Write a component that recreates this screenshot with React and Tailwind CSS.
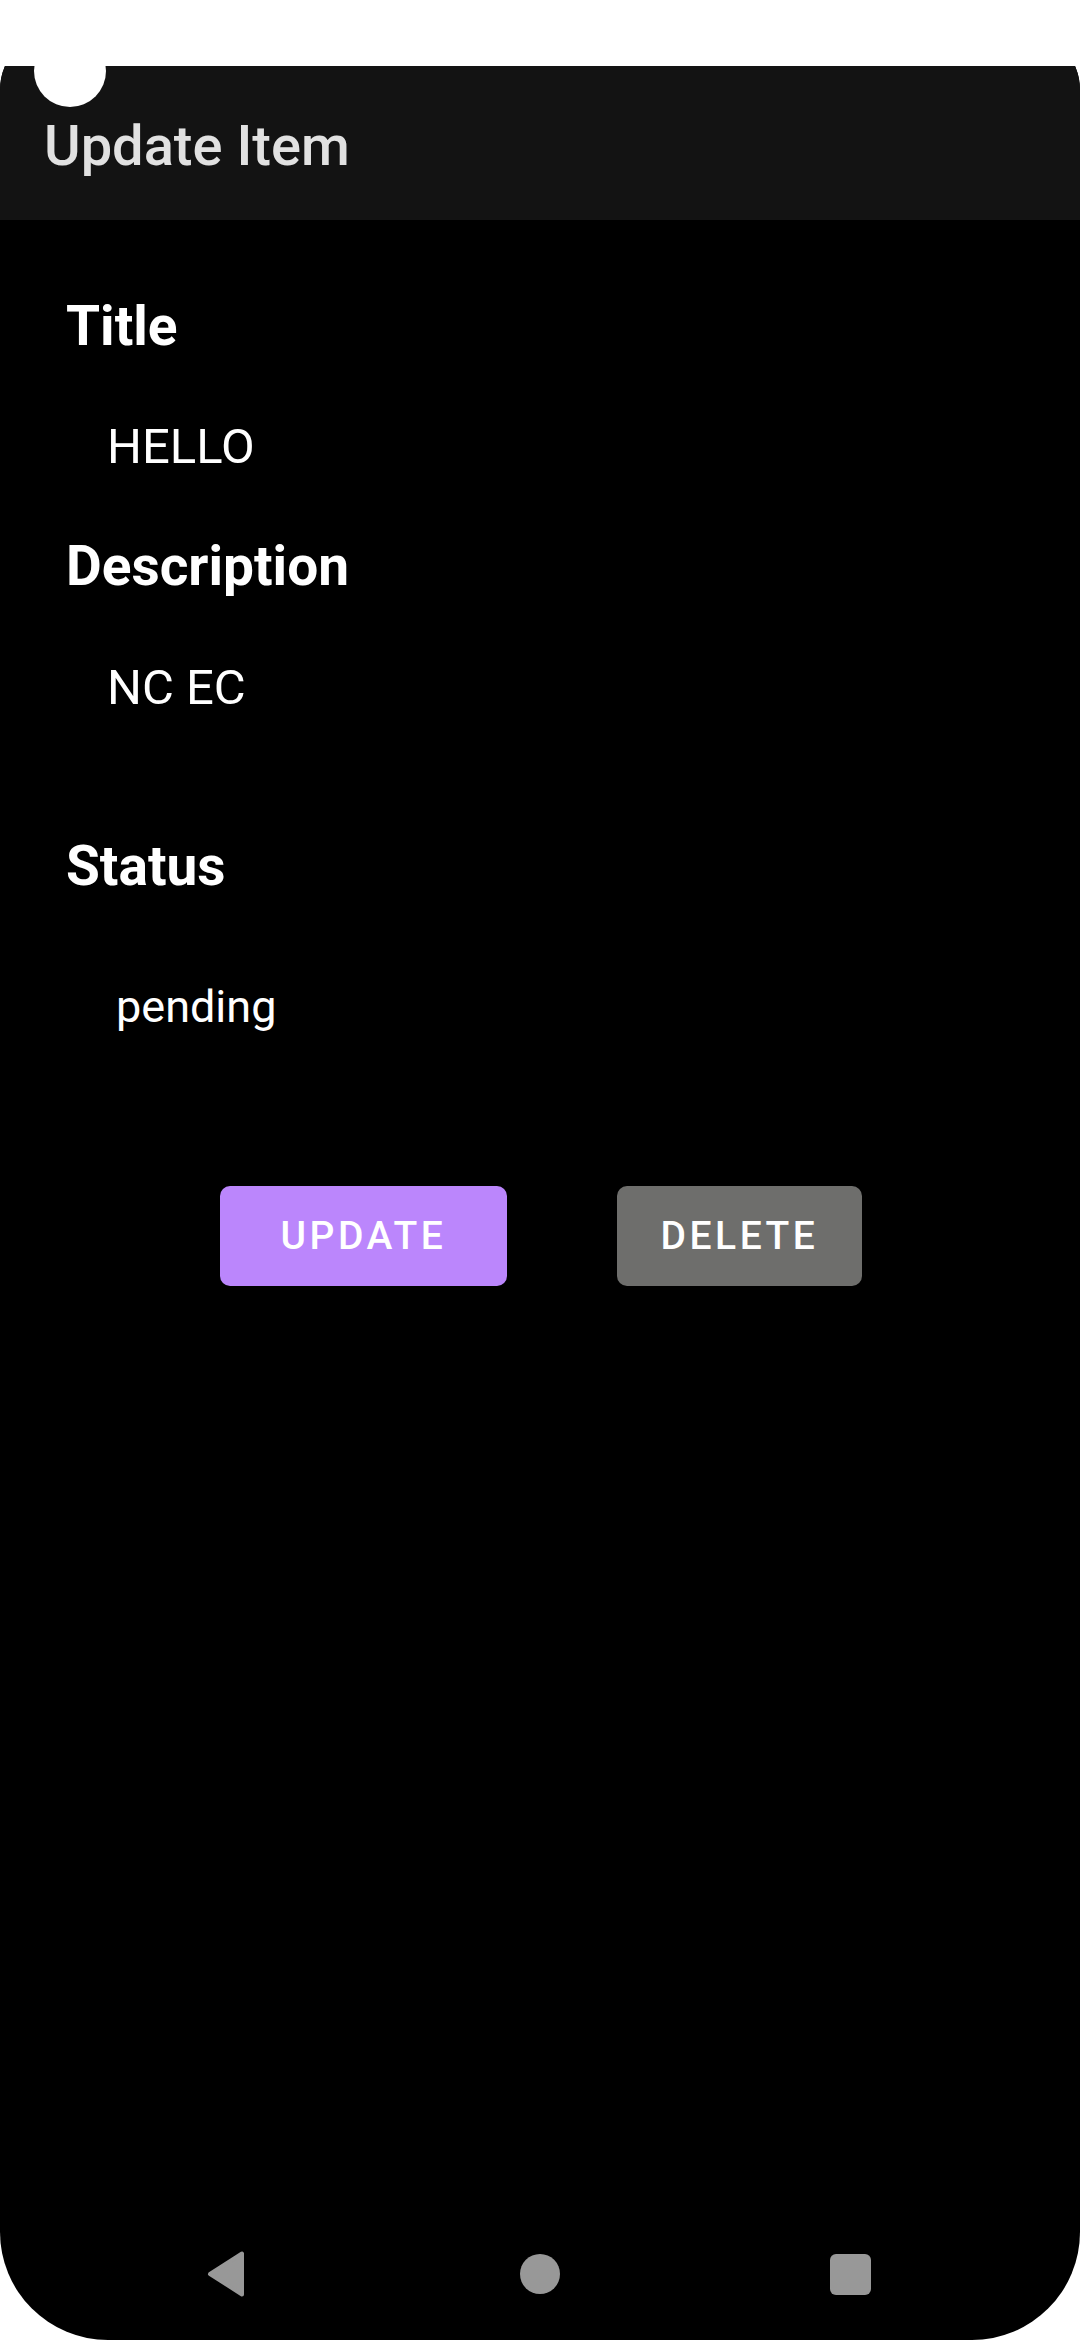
export default function App() {
  return (
    <div className="relative w-[1080px] h-[2340px] bg-white overflow-hidden font-['Roboto',sans-serif]">
      <div className="mt-[30px] h-[2310px] flex flex-col bg-black rounded-t-[60px] rounded-b-[108px] overflow-hidden">
        <header className="h-[190px] pt-[42px] bg-[#131313] flex items-center pl-[44px]">
          <h1 className="text-[56px] leading-[66px] font-medium text-[#e1e1e1]">Update Item</h1>
        </header>

        <main className="flex-1 flex flex-col text-white">
          <div className="pl-[66px] mt-[74px] text-[55px] leading-[64px] font-bold">Title</div>
          <div className="pl-[107px] mt-[60px] text-[49px] leading-[57px]">HELLO</div>
          <div className="pl-[66px] mt-[59px] text-[55px] leading-[64px] font-bold">Description</div>
          <div className="pl-[107px] mt-[61px] text-[49px] leading-[57px]">NC EC</div>
          <div className="pl-[66px] mt-[118px] text-[55px] leading-[64px] font-bold">Status</div>
          <div className="pl-[116px] mt-[82px] text-[45px] leading-[53px]">pending</div>

          <div className="mt-[153px] flex justify-center gap-[110px] pl-[2px]">
            <button className="w-[287px] h-[100px] rounded-[10px] bg-[#bb86fc] text-white text-[39px] font-medium tracking-[0.09em]">
              UPDATE
            </button>
            <button className="w-[245px] h-[100px] rounded-[10px] bg-[#6e6e6c] text-white text-[39px] font-medium tracking-[0.09em]">
              DELETE
            </button>
          </div>
        </main>

        <nav className="h-[132px] flex items-center pl-[207px]">
          <svg width="38" height="46" viewBox="0 0 38 46">
            <polygon points="3,23 35,2.5 35,43.5" fill="#989898" stroke="#989898" strokeWidth="4" strokeLinejoin="round" />
          </svg>
          <div className="ml-[275px] w-[40px] h-[40px] rounded-full bg-[#989898]" />
          <div className="ml-[270px] w-[41px] h-[41px] rounded-[6px] bg-[#989898]" />
        </nav>
      </div>

      <div className="absolute top-0 left-0 w-full h-[66px] bg-white" />
      <div className="absolute left-[34px] top-[35px] w-[72px] h-[72px] rounded-full bg-white" />
    </div>
  );
}
